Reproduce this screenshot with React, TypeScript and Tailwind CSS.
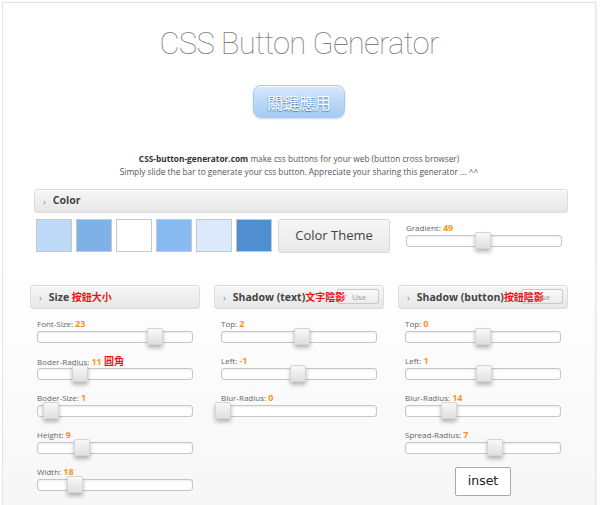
import React from "react";

function Slider({ pos }: { pos: number }) {
  return (
    <div className="relative h-[12px] w-[156px] rounded-[3px] border border-[#c6c6c6] bg-white shadow-[inset_0_1px_2px_rgba(0,0,0,0.08)]">
      <div
        className="absolute top-[-4px] h-[17px] w-[16px] rounded-[2px] border border-[#d4d4d4] bg-gradient-to-b from-[#f8f8f8] to-[#e0e0e0] shadow-[0_3px_4px_rgba(0,0,0,0.28)]"
        style={{ left: pos }}
      />
    </div>
  );
}

type Row = { label: string; value: string; extra?: string; pos: number };

function Label({ label, value, extra }: { label: string; value: string; extra?: string }) {
  return (
    <div className="h-[10px] whitespace-nowrap font-['Open_Sans',sans-serif] text-[8px] leading-[10px] text-[#666]">
      {label}{" "}
      <span className="text-[9px] font-bold text-[#f7941d]">{value}</span>
      {extra && (
        <span className="font-['Noto_Sans_CJK_TC',sans-serif] text-[10px] font-bold text-[#ee1111]"> {extra}</span>
      )}
    </div>
  );
}

function SliderRow({ row, first }: { row: Row; first?: boolean }) {
  return (
    <div className={first ? "mt-[10px] pl-[7px]" : "mt-[13px] pl-[7px]"}>
      <Label label={row.label} value={row.value} extra={row.extra} />
      <div className="mt-[2px]">
        <Slider pos={row.pos} />
      </div>
    </div>
  );
}

function Header({ title, cn, use }: { title: string; cn?: string; use?: boolean }) {
  return (
    <div className="relative flex h-[24px] items-center rounded-[3px] border border-[#dcdcdc] bg-gradient-to-b from-[#f6f6f6] to-[#e7e7e7] pl-[8px] shadow-[inset_0_1px_0_#fff]">
      {use && (
        <div className="absolute right-[4px] top-[3px] flex h-[15px] w-[42px] items-center rounded-[2px] border border-[#c9c9c9] bg-gradient-to-b from-[#fafafa] to-[#ececec] pl-[3px] font-['Open_Sans',sans-serif] text-[8px] text-[#9a9a9a]">
          <span className="text-[9px] leading-none text-[#b0b0b0]">✓</span>
          <span className="ml-[3px]">Use</span>
        </div>
      )}
      <span className="text-[9px] leading-none text-[#888]">›</span>
      <span className="relative ml-[7px] whitespace-nowrap font-['Open_Sans',sans-serif] text-[10.5px] font-bold text-[#444]">
        {title}
        {cn && (
          <span className="font-['Noto_Sans_CJK_TC',sans-serif] text-[10px] font-bold text-[#ee1111]">{cn}</span>
        )}
      </span>
    </div>
  );
}

function Column({
  title,
  cn,
  use,
  rows,
  children,
}: {
  title: string;
  cn?: string;
  use?: boolean;
  rows: Row[];
  children?: React.ReactNode;
}) {
  return (
    <div className="w-[170px]">
      <Header title={title} cn={cn} use={use} />
      {rows.map((r, i) => (
        <SliderRow key={r.label} row={r} first={i === 0} />
      ))}
      {children}
    </div>
  );
}

export default function App() {
  const swatches = ["#bddbf9", "#7eb2e7", "#ffffff", "#86baf1", "#dbe9fa", "#4f8fd0"];
  return (
    <div className="h-[505px] w-[600px] overflow-hidden bg-white pl-[2px] pt-[2px]">
      <div className="h-[520px] w-[594px] border border-[#e4e4e4] bg-gradient-to-b from-white via-white to-[#f6f6f6] shadow-[1px_0_2px_rgba(0,0,0,0.06)]">
        <h1 className="mt-[23px] h-[36px] text-center font-['Roboto',sans-serif] text-[31px] font-thin leading-[36px] tracking-[-0.7px] text-[#808080]">
          CSS Button Generator
        </h1>
        <div className="mt-[23px] flex justify-center">
          <div className="flex h-[33px] w-[92px] items-center justify-center rounded-[8px] border border-[#a6c8ee] bg-gradient-to-b from-[#d7e9fc] via-[#bcd8f7] to-[#a5cbf3] font-['Noto_Sans_CJK_TC',sans-serif] text-[16px] text-white shadow-[inset_0_1px_0_rgba(255,255,255,0.8),0_1px_2px_rgba(120,160,210,0.4)] [text-shadow:0_1px_1px_#3f78c2]">
            關鍵應用
          </div>
        </div>
        <p className="mt-[34px] text-center font-['Open_Sans',sans-serif] text-[8.3px] leading-[13px] text-[#555]">
          <b className="text-[#333]">CSS-button-generator.com</b> make css buttons for your web (button cross browser)
          <br />
          Simply slide the bar to generate your css button. Appreciate your sharing this generator ... ^^
        </p>
        <div className="ml-[31px] mt-[11px] w-[534px]">
          <Header title="Color" />
        </div>
        <div className="ml-[33px] mt-[6px] flex items-start">
          <div className="flex gap-[4px]">
            {swatches.map((c) => (
              <div
                key={c}
                className="h-[33px] w-[36px] border border-[#c8c8c8]"
                style={{ backgroundColor: c }}
              />
            ))}
          </div>
          <div className="ml-[6px] flex h-[34px] w-[112px] items-center justify-center rounded-[3px] border border-[#d8d8d8] bg-gradient-to-b from-[#f6f6f6] to-[#e9e9e9] font-['Open_Sans',sans-serif] text-[13px] text-[#444]">
            Color Theme
          </div>
          <div className="ml-[16px] pt-[4px]">
            <Label label="Gradient:" value="49" />
            <div className="mt-[2px]">
              <Slider pos={68} />
            </div>
          </div>
        </div>
        <div className="ml-[27px] mt-[32px] flex gap-[14px]">
          <Column
            title="Size "
            cn="按鈕大小"
            rows={[
              { label: "Font-Size:", value: "23", pos: 109 },
              { label: "Boder-Radius:", value: "11", extra: "圓角", pos: 34 },
              { label: "Boder-Size:", value: "1", pos: 5 },
              { label: "Height:", value: "9", pos: 36 },
              { label: "Width:", value: "18", pos: 29 },
            ]}
          />
          <Column
            title="Shadow (text)"
            cn="文字陰影"
            use
            rows={[
              { label: "Top:", value: "2", pos: 72 },
              { label: "Left:", value: "-1", pos: 68 },
              { label: "Blur-Radius:", value: "0", pos: -7 },
            ]}
          />
          <Column
            title="Shadow (button)"
            cn="按鈕陰影"
            use
            rows={[
              { label: "Top:", value: "0", pos: 69 },
              { label: "Left:", value: "1", pos: 70 },
              { label: "Blur-Radius:", value: "14", pos: 35 },
              { label: "Spread-Radius:", value: "7", pos: 81 },
            ]}
          >
            <div className="ml-[57px] mt-[13px] flex h-[29px] w-[56px] items-center justify-center rounded-[2px] border border-[#a9a9a9] bg-white font-['DejaVu_Sans',sans-serif] text-[12.5px] text-[#222]">
              inset
            </div>
          </Column>
        </div>
      </div>
    </div>
  );
}
